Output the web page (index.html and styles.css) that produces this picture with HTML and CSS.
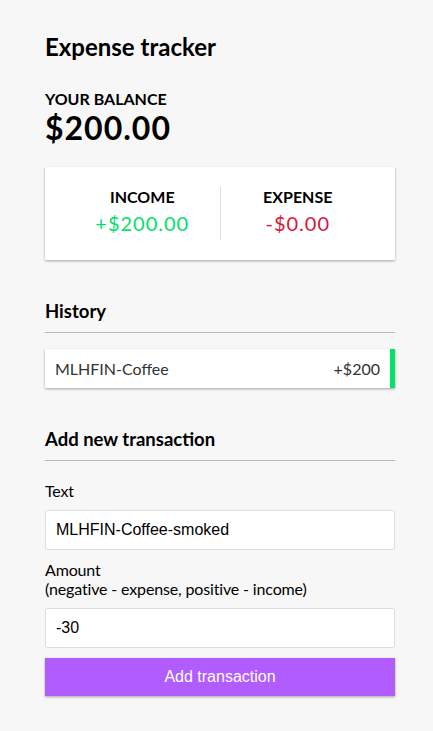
FILE: index.html
```html
<!DOCTYPE html>
<html lang="en">
<head>
<meta charset="UTF-8">
<title>Expense Tracker</title>
<link rel="stylesheet" href="styles.css">
</head>
<body>
<div class="container">
  <h2 class="title">Expense tracker</h2>
  <h4 class="balance-label">Your Balance</h4>
  <h1 class="balance">$200.00</h1>

  <div class="inc-exp-container">
    <div class="inc-exp">
      <h4>Income</h4>
      <p class="money plus">+$200.00</p>
    </div>
    <div class="inc-exp">
      <h4>Expense</h4>
      <p class="money minus">-$0.00</p>
    </div>
  </div>

  <h3 class="section-title">History</h3>
  <ul class="list">
    <li class="plus">MLHFIN-Coffee <span>+$200</span></li>
  </ul>

  <h3 class="section-title">Add new transaction</h3>
  <form class="form">
    <div class="form-control">
      <label class="label" for="text">Text</label>
      <input class="input" type="text" id="text" value="MLHFIN-Coffee-smoked">
    </div>
    <div class="form-control">
      <label class="label" for="amount">Amount <br>(negative - expense, positive - income)</label>
      <input class="input" type="text" id="amount" value="-30">
    </div>
    <button class="btn" type="button">Add transaction</button>
  </form>
</div>
</body>
</html>
```
FILE: styles.css
```css
* {
  box-sizing: border-box;
}

body {
  background-color: #f7f7f7;
  margin: 0;
  font-family: Lato, "Open Sans", sans-serif;
  color: #000;
}

.container {
  width: 350px;
  margin: 0 0 0 45px;
  padding-top: 32px;
}

.title {
  font-size: 24px;
  margin: 0 0 28px;
}

.balance-label {
  margin: 0;
  font-size: 16px;
  text-transform: uppercase;
}

.balance {
  font-size: 32px;
  letter-spacing: 1px;
  margin: 0;
}

.inc-exp-container {
  background-color: #fff;
  box-shadow: 0 1px 3px rgba(0, 0, 0, 0.12), 0 1px 2px rgba(0, 0, 0, 0.24);
  padding: 20px;
  display: flex;
  justify-content: space-between;
  margin: 20px 0 19px;
}

.inc-exp {
  flex: 1;
  text-align: center;
}

.inc-exp:first-of-type {
  border-right: 1px solid #dedede;
}

.inc-exp h4 {
  margin: 0;
  font-size: 16px;
  text-transform: uppercase;
}

.money {
  font-size: 20px;
  letter-spacing: 1px;
  margin: 5px 0;
}

.money.plus {
  color: #05e06a;
}

.money.minus {
  color: #dc143c;
}

.section-title {
  font-size: 18.5px;
  border-bottom: 1px solid #bbb;
  padding-bottom: 10px;
  margin: 40px 0 10px;
}

.list {
  list-style-type: none;
  padding: 0;
  margin: 0 0 39px;
}

.list li {
  background-color: #fff;
  box-shadow: 0 1px 3px rgba(0, 0, 0, 0.12), 0 1px 2px rgba(0, 0, 0, 0.24);
  color: #333;
  display: flex;
  justify-content: space-between;
  padding: 10px;
  margin: 16px 0 10px;
  font-size: 16px;
}

.list li.plus {
  border-right: 5px solid #05e06a;
}

.form {
  margin: 0;
}

.label {
  display: inline-block;
  margin: 10px 0;
  font-size: 16px;
  letter-spacing: -0.15px;
}

.input {
  border: 1px solid #dedede;
  border-radius: 2px;
  display: block;
  font-family: "Liberation Sans", Arial, sans-serif;
  font-size: 16px;
  padding: 10px;
  width: 100%;
  background: #fff;
  color: #000;
}

.btn {
  cursor: pointer;
  background-color: #b15cff;
  box-shadow: 0 1px 3px rgba(0, 0, 0, 0.12), 0 1px 2px rgba(0, 0, 0, 0.24);
  color: #fff;
  border: 0;
  display: block;
  font-family: "Liberation Sans", Arial, sans-serif;
  font-size: 16px;
  margin: 10px 0 30px;
  padding: 10px;
  width: 100%;
}
```
